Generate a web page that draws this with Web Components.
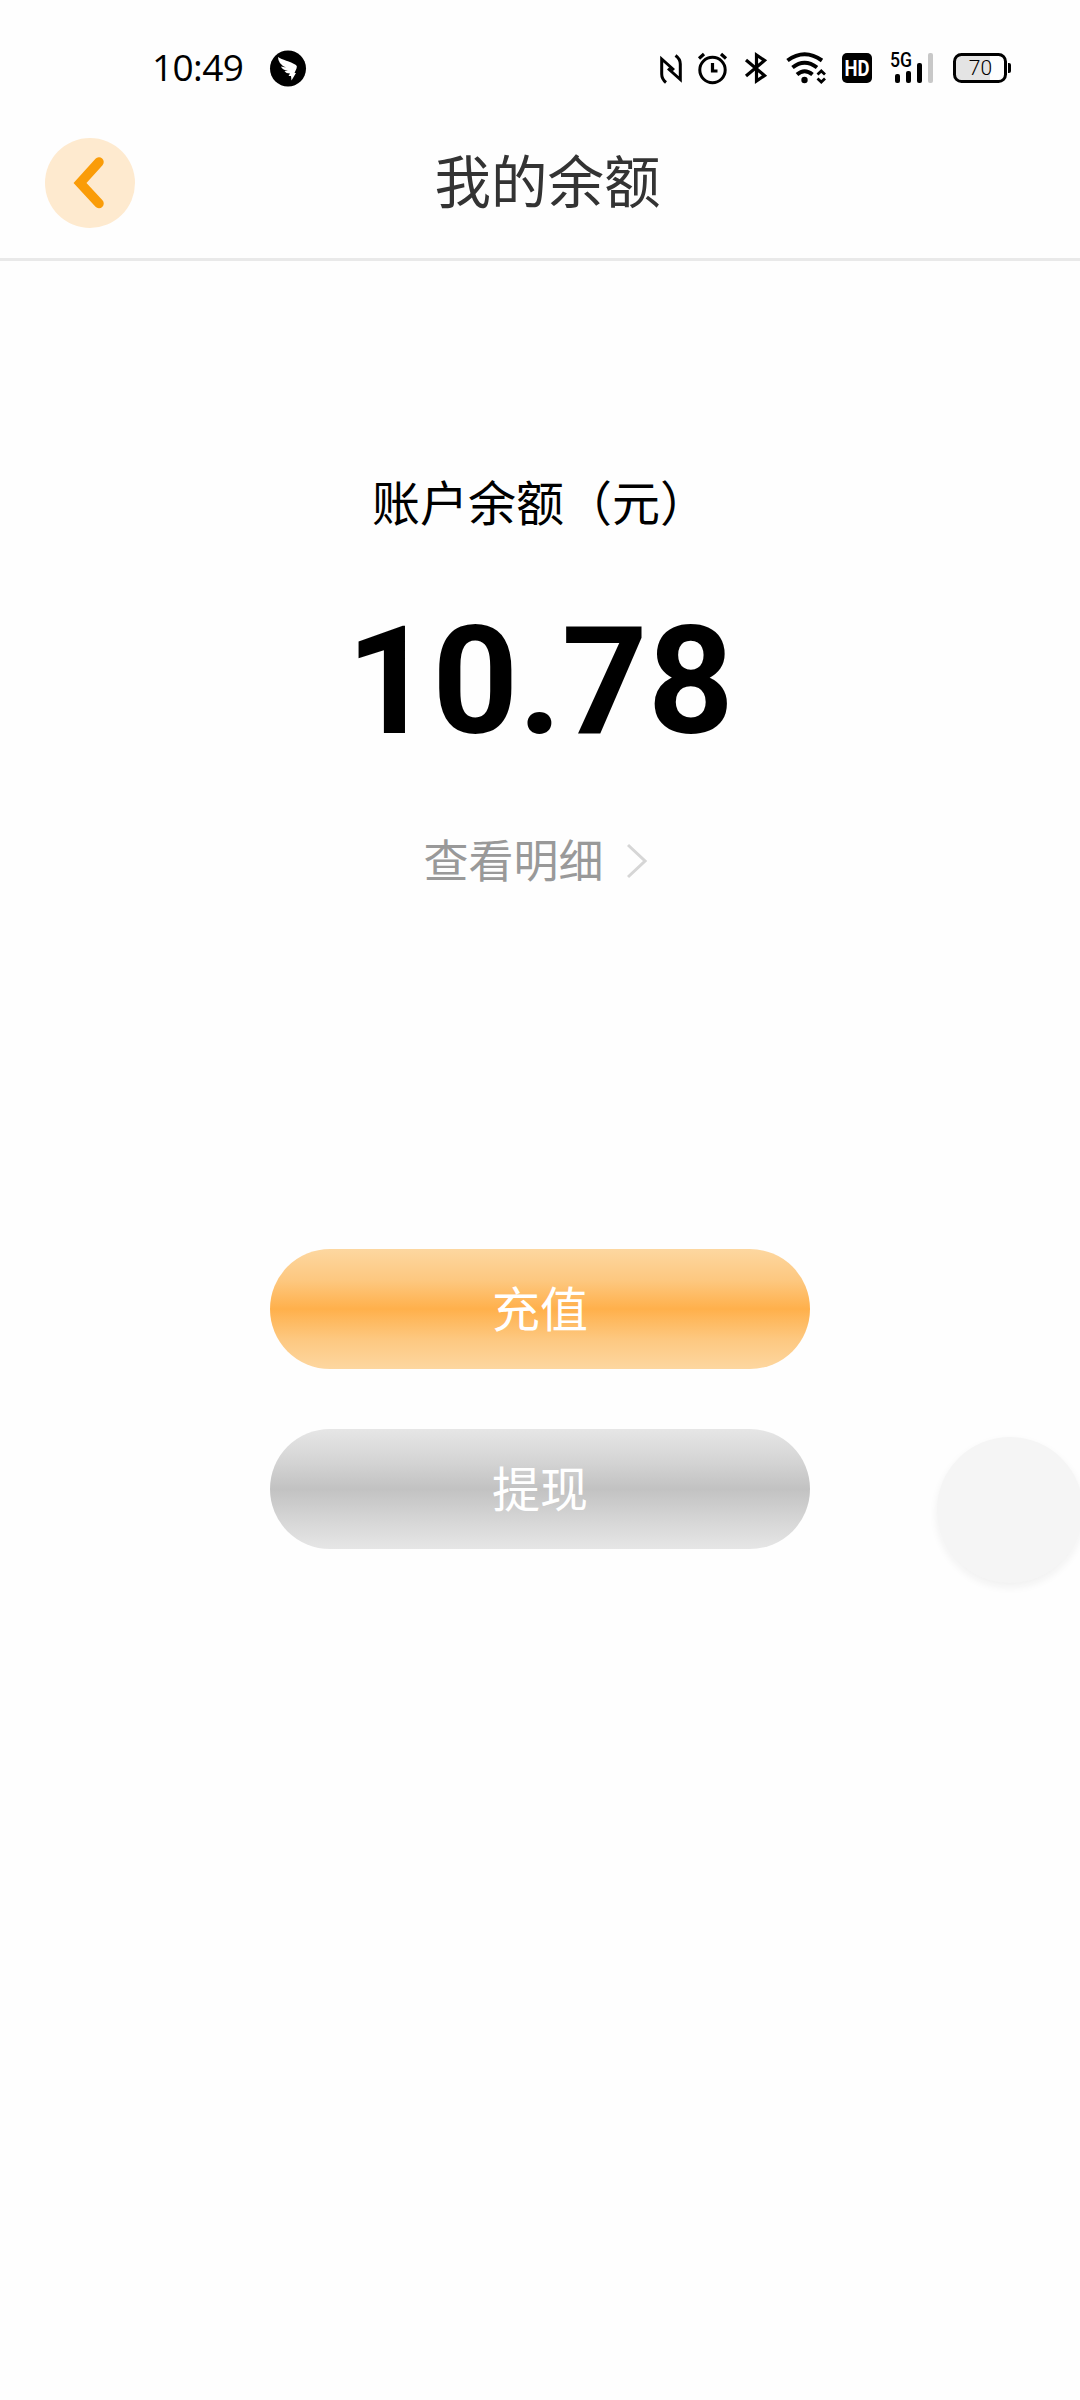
<!DOCTYPE html>
<html lang="zh-CN">
<head>
<meta charset="utf-8">
<title>我的余额</title>
<style>
    body {
        margin: 0;
        background: #fefefe;
        font-family: Roboto, "Noto Sans CJK SC", sans-serif;
    }
</style>
</head>
<body>
<balance-page></balance-page>

<template id="status-bar">
<style>
    :host {
        display: flex;
        align-items: center;
        box-sizing: border-box;
        height: 104px;
        padding: 32px 68px 0 152px;
        color: #000;
    }
    svg { display: block; flex: none; overflow: visible; }
    .time {
        font: 37px/50px "Open Sans", sans-serif;
        letter-spacing: -0.6px;
        width: 118px;
        margin-top: -2px;
    }
    .icons {
        display: flex;
        margin-left: auto;
    }
    .line { fill: none; stroke: #000; }
    text { font-family: Roboto, sans-serif; }
</style>
<div class="time">10:49</div>
<svg width="36" height="36" viewBox="0 0 36 36">
    <circle cx="18" cy="18.500" r="18"/>
    <path d="M8 7 C12 10 20 11 26 15 Q27.500 16 26.500 18.500 L24.500 23 L26 23 L21.500 30.500 L21 26 L18.500 26 L20 23.500 Q16 23.500 14.500 21 L18 21 Q12 19.500 11 16.500 L16 17.500 Q8 14 8 7Z" fill="#fff"/>
</svg>
<div class="icons">
    <svg width="22" height="32" viewBox="0 0 22 32">
        <path class="line" stroke-width="3" d="M6 30.500 Q1.700 27 1.700 22 V7 L14 18 M15.500 3.500 Q20.300 7 20.300 12 V27.500 L8 16.500"/>
    </svg>
    <svg width="30" height="32" viewBox="0 0 30 32" style="margin-left:16px">
        <circle class="line" cx="14.500" cy="18" r="12.700" stroke-width="3"/>
        <path class="line" stroke-width="3.200" d="M14.500 11 V19 H19.500 M1 6.500 L6 2 M23 2 L28 6.500"/>
    </svg>
    <svg width="24" height="32" viewBox="0 0 24 32" style="margin-left:16px">
        <path class="line" stroke-width="3.200" d="M2 8 L20.500 23.500 L12.500 29 V3 L20.500 8.500 L2 24"/>
    </svg>
    <svg width="42" height="32" viewBox="0 0 42 32" style="margin-left:18px">
        <path class="line" stroke-width="4" d="M1.500 8.500 Q18.500 -4 36 8.500 M6.500 15.500 Q18.500 6 31 15.500 M11 22.500 Q18.500 16 26.500 22.500"/>
        <circle cx="18.500" cy="28" r="3.200"/>
        <path class="line" stroke-width="2.800" d="M31.500 22.500 L35.300 19 L39 22.500 M31.500 26.500 L35.300 30 L39 26.500"/>
    </svg>
    <svg width="30" height="32" viewBox="0 0 30 32" style="margin-left:14px">
        <rect y="1" width="30" height="30" rx="5"/>
        <text x="15" y="23.500" font-size="22" font-weight="700" fill="#fff" text-anchor="middle" textLength="25" lengthAdjust="spacingAndGlyphs">HD</text>
    </svg>
    <svg width="44" height="36" viewBox="0 -4 44 36" style="margin:-4px 0 0 18px">
        <text x="0" y="15" font-size="19.500" font-weight="500" textLength="22" lengthAdjust="spacingAndGlyphs">5G</text>
        <rect x="5" y="22" width="5" height="9" rx="2"/>
        <rect x="16" y="19" width="5" height="12" rx="2"/>
        <rect x="27" y="11" width="5" height="20" rx="2"/>
        <rect x="38" y="1" width="5" height="30" rx="2" fill="#c8c8c8"/>
    </svg>
    <svg width="59" height="32" viewBox="0 0 59 32" style="margin-left:19px">
        <rect x="3" y="3" width="34" height="26" fill="#e4e4e4"/>
        <rect class="line" x="1.500" y="2.500" width="51" height="27" rx="7" stroke-width="3"/>
        <path d="M55 11 h1 q2 0 2 2 v6 q0 2 -2 2 h-1z"/>
        <text x="27.500" y="23" font-size="21" font-weight="300" text-anchor="middle">70</text>
    </svg>
</div>
</template>

<template id="nav-header">
<style>
    :host {
        display: grid;
        grid-template-columns: 90px 1fr 90px;
        align-items: center;
        box-sizing: border-box;
        height: 157px;
        padding: 3px 30px 0 45px;
        border-bottom: 3px solid #e9e9e9;
    }
    .back { display: block; }
    .title {
        font-size: 56.5px;
        line-height: 80px;
        margin-top: 2px;
        text-align: center;
        color: #333;
    }
</style>
<svg class="back" width="90" height="90" viewBox="0 0 90 90">
    <circle cx="45" cy="45" r="45" fill="#feeacf"/>
    <path d="M54 24 L35 45 L54 65.500" fill="none" stroke="#fa9c08" stroke-width="9.500" stroke-linecap="round"/>
</svg>
<div class="title"><slot></slot></div>
</template>

<template id="balance-summary">
<style>
    :host {
        display: flex;
        flex-direction: column;
        align-items: center;
        padding-top: 209px;
    }
    .label {
        font-size: 48px;
        line-height: 70px;
        color: #000;
    }
    .amount {
        margin-top: 54px;
        font-size: 150px;
        font-weight: 700;
        line-height: 176px;
        color: #000;
    }
    .detail {
        display: flex;
        align-items: center;
        gap: 23px;
        margin-top: 60px;
        padding-right: 10px;
        font-size: 45px;
        line-height: 66px;
        color: #999;
    }
    svg { margin-top: -4px; }
</style>
<div class="label"><slot name="label"></slot></div>
<div class="amount"><slot name="amount"></slot></div>
<div class="detail">
    <slot name="detail"></slot>
    <svg width="20" height="36" viewBox="0 0 20 36">
        <path d="M1 2 L18 18 L1 34" fill="none" stroke="#d6d6d6" stroke-width="3"/>
    </svg>
</div>
</template>

<template id="pill-button">
<style>
    :host {
        display: block;
        width: 540px;
        --edge: #fdd7a0;
        --side: #fdc880;
        --core: #ffb04b;
    }
    :host([disabled]) {
        --edge: #e6e6e6;
        --side: #d5d5d5;
        --core: #c2c2c2;
    }
    button {
        display: block;
        width: 100%;
        height: 120px;
        padding: 0 0 6px;
        border: 0;
        border-radius: 60px;
        background: linear-gradient(var(--edge), var(--side) 26%, var(--core) 50%, var(--side) 75%, var(--edge));
        font: inherit;
        font-size: 48px;
        color: #fff;
    }
</style>
<button><slot></slot></button>
</template>

<template id="balance-page">
<style>
    :host {
        display: block;
        position: relative;
        width: 1080px;
        height: 2400px;
        overflow: hidden;
    }
    .actions {
        display: flex;
        flex-direction: column;
        align-items: center;
        gap: 60px;
        margin-top: 353px;
    }
    /* floating assist ball, half docked to the right edge */
    .ball {
        position: absolute;
        left: 937px;
        top: 1437px;
        width: 146px;
        height: 146px;
        border-radius: 50%;
        background: #f5f5f5;
        box-shadow: 0 4px 8px #f0f0f0;
    }
</style>
<status-bar></status-bar>
<nav-header>我的余额</nav-header>
<balance-summary>
    <span slot="label">账户余额（元）</span>
    <span slot="amount">10.78</span>
    <span slot="detail">查看明细</span>
</balance-summary>
<div class="actions">
    <pill-button>充值</pill-button>
    <pill-button disabled>提现</pill-button>
</div>
<div class="ball"></div>
</template>

<script>
class TemplateElement extends HTMLElement {
    constructor() {
        super()
        const template = document.getElementById(this.localName);
        this.root = this.attachShadow({ mode: 'open' });
        this.root.appendChild(template.content.cloneNode(true));
    }
}

class StatusBar extends TemplateElement {}
class NavHeader extends TemplateElement {}
class BalanceSummary extends TemplateElement {}
class BalancePage extends TemplateElement {}

class PillButton extends TemplateElement {
    connectedCallback() {
        this.root.querySelector('button').disabled = this.hasAttribute('disabled');
    }
}

window.customElements.define('status-bar', StatusBar);
window.customElements.define('nav-header', NavHeader);
window.customElements.define('balance-summary', BalanceSummary);
window.customElements.define('pill-button', PillButton);
window.customElements.define('balance-page', BalancePage);
</script>
</body>
</html>
